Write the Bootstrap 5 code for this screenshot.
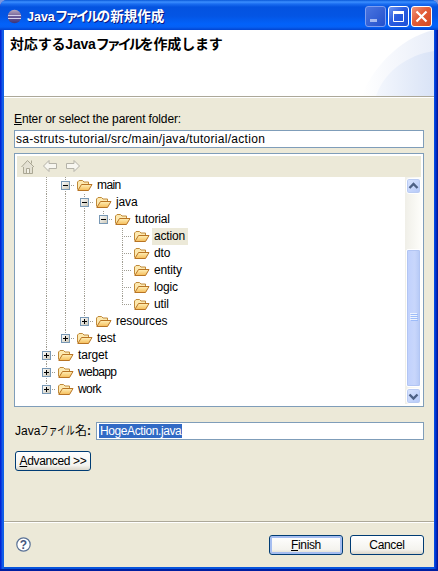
<!DOCTYPE html>
<html lang="ja">
<head>
<meta charset="utf-8">
<meta name="viewport" content="width=device-width, initial-scale=1">
<title>Javaファイルの新規作成</title>
<link href="https://cdn.jsdelivr.net/npm/bootstrap@5.3.0/dist/css/bootstrap.min.css" rel="stylesheet">
<style>
html,body{height:571px;overflow:hidden}
body{font:12px/17px "Liberation Sans","Noto Sans CJK JP",sans-serif;color:#000;background:#7b96df}
svg{display:block;flex:none}
.win{width:438px;height:571px;padding:0 4px 4px;border-radius:7px 7px 0 0;background:linear-gradient(90deg,#0019cf 0,#0831d9 1px,#166aee 3px,#0855dd 4px,#0855dd 434px,#0040e0 435px,#0020b0 437px,#00138c 438px);box-shadow:inset 0 -2px #001ea0;overflow:hidden}
.titlebar{height:30px;margin:0 -4px;padding:6px 6px 0 7px;background:linear-gradient(#0958d8 0,#3c8fff 2px,#1a6df0 4px,#0453e0 7px,#0455e4 16px,#0262fa 24px,#0560f5 27px,#0344cf 30px)}
.eclipse{margin-top:3px}
.title-text{font-size:13.5px;font-weight:700;color:#fff;text-shadow:1px 1px #0a1883;white-space:nowrap;margin:2px 0 0 5px}
.title-text .lat{font-size:12.5px}
.kana{letter-spacing:-3px}
.caps{gap:2px}
.cap{width:21px;height:21px;border:1px solid #fff;border-radius:3px;background:linear-gradient(135deg,#6f96f0,#2a5ce0 45%,#1c50d8)}
.cap.dim{border-color:#7d9df0;background:linear-gradient(135deg,#4a75e0,#2450cc)}
.cap.close-x{background:linear-gradient(135deg,#f0947a,#e25c38 45%,#d64a22)}
.banner{height:67px;background:#fff;border-bottom:1px solid #aca899}
.banner h1{font-size:14px;font-weight:700;line-height:20px;margin:0;padding:4px 0 0 6px;white-space:nowrap;letter-spacing:-.18px}
.banner .kana{letter-spacing:-3px}
.body-area{height:425px;background:#ece9d8;border-top:1px solid #fff;padding:13px 10px 0}
.parent-label{letter-spacing:-.13px}
.field{height:18px;border:1px solid #7f9db9;background:#fff;padding:0 1px;line-height:17px;white-space:nowrap}
.path-field{margin-top:2px;letter-spacing:.3px}
.panel{height:254px;margin-top:5px;border:1px solid #7f9db9;background:#fff;padding:2px 1px 0 2px}
.tools{height:21px;background:#ece9d8;padding:2px 0 0 3px;margin-right:1px}
.tree{height:227px;padding-left:20px}
.sb{width:17px;height:227px;background:linear-gradient(90deg,#f0efe8,#fefefb);padding:1px 0 0 1px}
.sbtn{width:15px;height:16px;border:1px solid #fff;border-radius:3px;background:linear-gradient(135deg,#dbe6ff,#b4c8f8);box-shadow:inset 0 0 0 1px #b9cbf3}
.thumb{width:15px;height:138px;margin:55px 0 1px;padding:62px 0 0 3px;border:1px solid #fff;border-radius:2px;background:linear-gradient(90deg,#c0d1fd,#c8d6fb 60%,#b4c8f6);box-shadow:inset 0 0 0 1px #b2c5f3}
.node{height:17px;line-height:17px;letter-spacing:-.15px}
.node.tight{letter-spacing:-.6px}
.node .fold{margin-left:2px}
.node span{padding:0 2px;margin-left:2px}
.node .sel{background:#ece9d8;padding-right:3px}
.name-row{margin-top:15px}
.name-label{width:82px;line-height:18px;white-space:nowrap;padding-left:1px}
.narrow{display:inline-block;transform:scaleX(.72);transform-origin:0 50%;margin-right:-13.5px}
.hl{background:#316ac5;color:#fff;display:inline-block;height:14px;line-height:14px;margin:1px 0 0 1px;padding:0 1px;vertical-align:top;letter-spacing:-.4px}
.xbtn,.xbtn:hover{height:20px;border:1px solid #003c74;border-radius:3px;background:linear-gradient(#fff,#f4f3ee 75%,#dad6c9);line-height:19px;padding:0;font-size:12px;color:#000;white-space:nowrap;letter-spacing:-.35px}
.xbtn.def{box-shadow:inset 0 0 0 2px #a5bdf0}
.adv{width:76px;margin:11px 0 0 1px}
.act{width:74px}
.foot{height:45px;background:#ece9d8;border-top:1px solid #fff;box-shadow:0 -1px #aca899;padding:12px 10px 0;gap:7px}
.help{margin:2px 0 0 2px}
.help text{font:bold 12px "Liberation Sans",sans-serif}
</style>
<script src="https://cdn.jsdelivr.net/npm/bootstrap@5.3.0/dist/js/bootstrap.bundle.min.js"></script>
</head>
<body>
<svg width="0" height="0" class="position-absolute">
<defs>
<linearGradient id="fg" x1="0" y1="0" x2="0" y2="1"><stop offset="0" stop-color="#fff0b8"/><stop offset="1" stop-color="#f5bc58"/></linearGradient>
<linearGradient id="bg" x1="0" y1="0" x2="1" y2="1"><stop offset="0" stop-color="#fff"/><stop offset="1" stop-color="#c9c5b5"/></linearGradient>
<linearGradient id="ec" x1="0" y1="0" x2="0" y2="1"><stop offset="0" stop-color="#b9a8bc"/><stop offset=".5" stop-color="#6a5a98"/><stop offset="1" stop-color="#3c3478"/></linearGradient>
<symbol id="v" viewBox="0 0 19 17"><path d="M9.5 0V17" stroke="#a09d92" stroke-dasharray="1 1"/></symbol>
<symbol id="b" viewBox="0 0 19 17"><path d="M9.5 0V17M15 8.5H19" stroke="#a09d92" stroke-dasharray="1 1"/></symbol>
<symbol id="l" viewBox="0 0 19 17"><path d="M9.5 0V9M11 8.5H19" stroke="#a09d92" stroke-dasharray="1 1"/></symbol>
<symbol id="t" viewBox="0 0 19 17"><path d="M9.5 0V17M11 8.5H19" stroke="#a09d92" stroke-dasharray="1 1"/></symbol>
<symbol id="minus" viewBox="0 0 19 17"><rect x="5.5" y="4.5" width="8" height="8" fill="url(#bg)" stroke="#7898b5"/><path d="M7 8.5H12" stroke="#000"/></symbol>
<symbol id="plus" viewBox="0 0 19 17"><rect x="5.5" y="4.5" width="8" height="8" fill="url(#bg)" stroke="#7898b5"/><path d="M7 8.5H12M9.5 6V11" stroke="#000"/></symbol>
<symbol id="f" viewBox="0 0 16 17"><path d="M.5 12.500V5L2 3.500H5.500L7 5H11.500V8" fill="#fde9b0" stroke="#c08a3a"/><path d="M.8 13.500L4.500 7.500H15L11.500 13.500Z" fill="url(#fg)" stroke="#b87424"/></symbol>
</defs>
</svg>
<div class="win">
<div class="titlebar d-flex align-items-start">
<svg class="eclipse" width="15" height="15"><circle cx="7.5" cy="7.5" r="6.8" fill="url(#ec)"/><path d="M1 6.500H14M1 9.500H14" stroke="#d4d0ec"/></svg>
<div class="title-text"><span class="lat">Java</span><span class="kana">ファイル</span>の新規作成</div>
<div class="caps d-flex ms-auto">
<div class="cap dim"><svg width="19" height="19"><path d="M4 13.500H11" stroke="#a5b9f0" stroke-width="3"/></svg></div>
<div class="cap"><svg width="19" height="19"><path d="M4.500 5V14.500H14.500V5" fill="none" stroke="#fff"/><path d="M4 5.500H15" stroke="#fff" stroke-width="3"/></svg></div>
<div class="cap close-x"><svg width="19" height="19"><path d="M4.500 4.500L14.500 14.500M14.500 4.500L4.500 14.500" stroke="#fff" stroke-width="2.2"/></svg></div>
</div>
</div>
<div class="banner d-flex justify-content-between">
<h1>対応するJava<span class="kana">ファイル</span>を作成します</h1>
<svg width="72" height="66"><defs><linearGradient id="s1" x1="0" y1="0" x2="1" y2="0"><stop offset="0" stop-color="#fff"/><stop offset="1" stop-color="#e9eef9"/></linearGradient><linearGradient id="s2" x1="0" y1="0" x2="1" y2="0"><stop offset="0" stop-color="#f4f7fd"/><stop offset="1" stop-color="#d9e3f6"/></linearGradient></defs><path d="M0 66C8 42 36 8 72 0V66Z" fill="url(#s1)"/><path d="M14 66C22 42 45 25 72 21V66Z" fill="url(#s2)"/></svg>
</div>
<div class="body-area">
<div class="parent-label"><u>E</u>nter or select the parent folder:</div>
<div class="field path-field">sa-struts-tutorial/src/main/java/tutorial/action</div>
<div class="panel">
<div class="tools">
<svg width="70" height="18"><g fill="#e4e1d3" stroke="#aaa794"><path d="M3.500 8V15.500H12.500V8"/><path d="M1.500 9L7.500 2.500L14 9M11.500 5.500V2.500"/><path d="M6.500 15V10.500H9.500V15" fill="#f4f2e8"/></g><g fill="#f7f6f0" stroke="#b4b2a8"><path d="M23.500 8L29 2.500V5.500H36.500V10.500H29V13.500Z"/><path d="M59.500 8L54 2.500V5.500H46.500V10.500H54V13.500Z"/></g></svg>
</div>
<div class="d-flex">
<div class="tree flex-grow-1">
<div class="node tight d-flex"><svg width="38" height="17"><use href="#v" width="19" height="17"/><use href="#b" x="19" width="19" height="17"/><use href="#minus" x="19" width="19" height="17"/></svg><svg class="fold" width="16" height="17"><use href="#f"/></svg><span>main</span></div>
<div class="node d-flex"><svg width="57" height="17"><use href="#v" width="19" height="17"/><use href="#v" x="19" width="19" height="17"/><use href="#b" x="38" width="19" height="17"/><use href="#minus" x="38" width="19" height="17"/></svg><svg class="fold" width="16" height="17"><use href="#f"/></svg><span>java</span></div>
<div class="node d-flex"><svg width="76" height="17"><use href="#v" width="19" height="17"/><use href="#v" x="19" width="19" height="17"/><use href="#v" x="38" width="19" height="17"/><use href="#l" x="57" width="19" height="17"/><use href="#minus" x="57" width="19" height="17"/></svg><svg class="fold" width="16" height="17"><use href="#f"/></svg><span>tutorial</span></div>
<div class="node d-flex"><svg width="95" height="17"><use href="#v" width="19" height="17"/><use href="#v" x="19" width="19" height="17"/><use href="#v" x="38" width="19" height="17"/><use href="#t" x="76" width="19" height="17"/></svg><svg class="fold" width="16" height="17"><use href="#f"/></svg><span class="sel">action</span></div>
<div class="node d-flex"><svg width="95" height="17"><use href="#v" width="19" height="17"/><use href="#v" x="19" width="19" height="17"/><use href="#v" x="38" width="19" height="17"/><use href="#t" x="76" width="19" height="17"/></svg><svg class="fold" width="16" height="17"><use href="#f"/></svg><span>dto</span></div>
<div class="node d-flex"><svg width="95" height="17"><use href="#v" width="19" height="17"/><use href="#v" x="19" width="19" height="17"/><use href="#v" x="38" width="19" height="17"/><use href="#t" x="76" width="19" height="17"/></svg><svg class="fold" width="16" height="17"><use href="#f"/></svg><span>entity</span></div>
<div class="node d-flex"><svg width="95" height="17"><use href="#v" width="19" height="17"/><use href="#v" x="19" width="19" height="17"/><use href="#v" x="38" width="19" height="17"/><use href="#t" x="76" width="19" height="17"/></svg><svg class="fold" width="16" height="17"><use href="#f"/></svg><span>logic</span></div>
<div class="node d-flex"><svg width="95" height="17"><use href="#v" width="19" height="17"/><use href="#v" x="19" width="19" height="17"/><use href="#v" x="38" width="19" height="17"/><use href="#l" x="76" width="19" height="17"/></svg><svg class="fold" width="16" height="17"><use href="#f"/></svg><span>util</span></div>
<div class="node d-flex"><svg width="57" height="17"><use href="#v" width="19" height="17"/><use href="#v" x="19" width="19" height="17"/><use href="#l" x="38" width="19" height="17"/><use href="#plus" x="38" width="19" height="17"/></svg><svg class="fold" width="16" height="17"><use href="#f"/></svg><span>resources</span></div>
<div class="node d-flex"><svg width="38" height="17"><use href="#v" width="19" height="17"/><use href="#l" x="19" width="19" height="17"/><use href="#plus" x="19" width="19" height="17"/></svg><svg class="fold" width="16" height="17"><use href="#f"/></svg><span>test</span></div>
<div class="node d-flex"><svg width="19" height="17"><use href="#b"/><use href="#plus"/></svg><svg class="fold" width="16" height="17"><use href="#f"/></svg><span>target</span></div>
<div class="node tight d-flex"><svg width="19" height="17"><use href="#b"/><use href="#plus"/></svg><svg class="fold" width="16" height="17"><use href="#f"/></svg><span>webapp</span></div>
<div class="node tight d-flex"><svg width="19" height="17"><use href="#l"/><use href="#plus"/></svg><svg class="fold" width="16" height="17"><use href="#f"/></svg><span>work</span></div>
</div>
<div class="sb"><div class="sbtn"><svg width="13" height="14"><path d="M2.500 9L6.500 5L10.500 9" fill="none" stroke="#4d6185" stroke-width="2.4"/></svg></div><div class="thumb"><svg width="8" height="10"><path d="M0 1.500H7M0 3.500H7M0 5.500H7M0 7.500H7" stroke="#eef4fe"/><path d="M1 2.500H8M1 4.500H8M1 6.500H8M1 8.500H8" stroke="#8cb0f8" stroke-opacity=".7"/></svg></div><div class="sbtn"><svg width="13" height="14"><path d="M2.500 5.500L6.500 9.500L10.500 5.500" fill="none" stroke="#4d6185" stroke-width="2.4"/></svg></div></div>
</div>
</div>
<div class="name-row d-flex"><div class="name-label">Java<span class="narrow">ファイル</span>名<b>:</b></div><div class="field flex-grow-1"><span class="hl">HogeAction.java</span></div></div>
<button class="btn xbtn adv d-block"><u>A</u>dvanced &gt;&gt;</button>
</div>
<div class="foot d-flex align-items-start">
<svg class="help me-auto" width="15" height="15"><circle cx="7.500" cy="7.500" r="6.700" fill="#fff" stroke="#5a7296" stroke-width="1.200"/><text x="7.500" y="11.800" text-anchor="middle" fill="#46587e">?</text></svg>
<button class="btn xbtn def act"><u>F</u>inish</button><button class="btn xbtn act">Cancel</button>
</div>
</div>
</body>
</html>
